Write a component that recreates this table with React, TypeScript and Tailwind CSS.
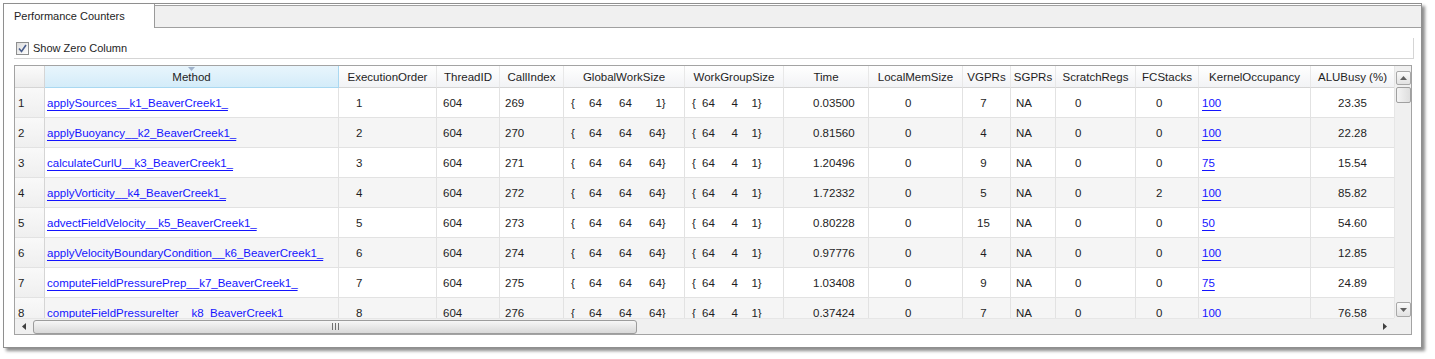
import React from 'react';

type Row = {
    method: string;
    order: string;
    thread: string;
    call: string;
    global: [string, string, string];
    group: [string, string, string];
    time: string;
    localMem: string;
    vgprs: string;
    sgprs: string;
    scratch: string;
    fcStacks: string;
    occupancy: string;
    aluBusy: string;
};

const rows: Row[] = [
    { method: 'applySources__k1_BeaverCreek1_', order: '1', thread: '604', call: '269', global: ['64', '64', '1'], group: ['64', '4', '1'], time: '0.03500', localMem: '0', vgprs: '7', sgprs: 'NA', scratch: '0', fcStacks: '0', occupancy: '100', aluBusy: '23.35' },
    { method: 'applyBuoyancy__k2_BeaverCreek1_', order: '2', thread: '604', call: '270', global: ['64', '64', '64'], group: ['64', '4', '1'], time: '0.81560', localMem: '0', vgprs: '4', sgprs: 'NA', scratch: '0', fcStacks: '0', occupancy: '100', aluBusy: '22.28' },
    { method: 'calculateCurlU__k3_BeaverCreek1_', order: '3', thread: '604', call: '271', global: ['64', '64', '64'], group: ['64', '4', '1'], time: '1.20496', localMem: '0', vgprs: '9', sgprs: 'NA', scratch: '0', fcStacks: '0', occupancy: '75', aluBusy: '15.54' },
    { method: 'applyVorticity__k4_BeaverCreek1_', order: '4', thread: '604', call: '272', global: ['64', '64', '64'], group: ['64', '4', '1'], time: '1.72332', localMem: '0', vgprs: '5', sgprs: 'NA', scratch: '0', fcStacks: '2', occupancy: '100', aluBusy: '85.82' },
    { method: 'advectFieldVelocity__k5_BeaverCreek1_', order: '5', thread: '604', call: '273', global: ['64', '64', '64'], group: ['64', '4', '1'], time: '0.80228', localMem: '0', vgprs: '15', sgprs: 'NA', scratch: '0', fcStacks: '0', occupancy: '50', aluBusy: '54.60' },
    { method: 'applyVelocityBoundaryCondition__k6_BeaverCreek1_', order: '6', thread: '604', call: '274', global: ['64', '64', '64'], group: ['64', '4', '1'], time: '0.97776', localMem: '0', vgprs: '4', sgprs: 'NA', scratch: '0', fcStacks: '0', occupancy: '100', aluBusy: '12.85' },
    { method: 'computeFieldPressurePrep__k7_BeaverCreek1_', order: '7', thread: '604', call: '275', global: ['64', '64', '64'], group: ['64', '4', '1'], time: '1.03408', localMem: '0', vgprs: '9', sgprs: 'NA', scratch: '0', fcStacks: '0', occupancy: '75', aluBusy: '24.89' },
    { method: 'computeFieldPressureIter__k8_BeaverCreek1', order: '8', thread: '604', call: '276', global: ['64', '64', '64'], group: ['64', '4', '1'], time: '0.37424', localMem: '0', vgprs: '7', sgprs: 'NA', scratch: '0', fcStacks: '0', occupancy: '100', aluBusy: '76.58' },
];

const headers = ['ExecutionOrder', 'ThreadID', 'CallIndex', 'GlobalWorkSize', 'WorkGroupSize', 'Time', 'LocalMemSize', 'VGPRs', 'SGPRs', 'ScratchRegs', 'FCStacks', 'KernelOccupancy', 'ALUBusy (%)'];

const gridCols = 'grid grid-cols-[30px_294px_98px_63px_64px_121px_99px_85px_94px_48px_45px_80px_63px_112px_84px]';

const cellBase = 'flex items-center h-[30px] pt-[2px] border-r border-b border-[#e2e2e2] whitespace-nowrap overflow-hidden';

function Link({ children }: { children: React.ReactNode }) {
    return <span className="text-[#1414ff] underline underline-offset-[3px] decoration-skip-ink-none">{children}</span>;
}

function Triple({ values, widths }: { values: [string, string, string]; widths: [string, string, string] }) {
    return (
        <span className="flex">
            <span>{'{'}</span>
            <span className={`${widths[0]} text-right`}>{values[0]}</span>
            <span className={`${widths[1]} text-right`}>{values[1]}</span>
            <span className={`${widths[2]} text-right`}>{values[2]}</span>
            <span>{'}'}</span>
        </span>
    );
}

function Checkbox() {
    return (
        <span className="w-[13px] h-[13px] border border-[#8e8f8f] bg-gradient-to-br from-[#dcdcdc] to-white flex items-center justify-center">
            <svg width="11" height="11" viewBox="0 0 11 11">
                <path d="M2 5.5 L4.5 8.5 L9 2" fill="none" stroke="#4a5e8c" strokeWidth="1.6" />
            </svg>
        </span>
    );
}

function VScrollbar() {
    return (
        <div className="w-[17px] h-[252px] bg-[#f0f0f0] border-l border-[#e6e6e6] flex flex-col items-center pt-[5px]">
            <div className="w-[15px] h-[14px] border border-[#a8a8a8] rounded-[2px] bg-gradient-to-b from-[#fafafa] to-[#e2e2e2] flex items-center justify-center">
                <svg width="7" height="4" viewBox="0 0 7 4"><path d="M0 4 L3.5 0 L7 4 Z" fill="#606060" /></svg>
            </div>
            <div className="mt-[2px] w-[15px] h-[16px] border border-[#a0a0a0] rounded-[2px] bg-gradient-to-r from-[#f4f4f4] to-[#dedede]" />
            <div className="flex-1" />
            <div className="mb-[1px] w-[15px] h-[15px] border border-[#a8a8a8] rounded-[2px] bg-gradient-to-b from-[#fafafa] to-[#e2e2e2] flex items-center justify-center">
                <svg width="7" height="4" viewBox="0 0 7 4"><path d="M0 0 L3.5 4 L7 0 Z" fill="#606060" /></svg>
            </div>
        </div>
    );
}

function HScrollbar() {
    return (
        <div className="w-[1380px] h-[16px] bg-[#f0f0f0] border-t border-[#e6e6e6] flex items-center">
            <div className="w-[18px] flex justify-center">
                <svg width="4" height="7" viewBox="0 0 4 7"><path d="M4 0 L0 3.5 L4 7 Z" fill="#404040" /></svg>
            </div>
            <div className="w-[604px] h-[14px] border border-[#9c9c9c] rounded-[3px] bg-gradient-to-b from-[#f6f6f6] to-[#d9d9d9] flex items-center justify-center">
                <span className="flex gap-[2px]">
                    <span className="w-[1px] h-[7px] bg-[#707070]" />
                    <span className="w-[1px] h-[7px] bg-[#707070]" />
                    <span className="w-[1px] h-[7px] bg-[#707070]" />
                </span>
            </div>
            <div className="flex-1" />
            <div className="w-[18px] flex justify-center">
                <svg width="4" height="7" viewBox="0 0 4 7"><path d="M0 0 L4 3.5 L0 7 Z" fill="#404040" /></svg>
            </div>
        </div>
    );
}

export default function App() {
    return (
        <div className="w-[1435px] h-[359px] bg-white pt-[3px] pl-[3px] font-['Liberation_Sans',Arial,sans-serif] text-[#1e1e1e]">
            <div className="w-[1419px] h-[345px] border border-[#8f8f8f] shadow-[3px_3px_3px_rgba(0,0,0,0.45)] bg-white flex flex-col">
                {/* tab strip */}
                <div className="flex h-[24px]">
                    <div className="w-[151px] h-[24px] bg-white border-r border-[#9a9a9a] flex items-center pl-[10px] text-[11px]">
                        Performance Counters
                    </div>
                    <div className="flex-1 mt-[1px] bg-[#f0f0f0] border-t border-b border-[#a0a0a0]" />
                </div>

                {/* options bar */}
                <div className="ml-[10px] mt-[10px] w-[1400px] h-[21px] border-r border-b border-[#d5d5d5] flex items-center pl-[2px] gap-[4px] text-[11px]">
                    <Checkbox />
                    <span>Show Zero Column</span>
                </div>

                {/* grid */}
                <div className="ml-[10px] mt-[6px] w-[1398px] h-[270px] border border-[#a3a3a3] flex flex-col text-[11.5px]">
                    <div className="flex h-[252px]">
                        <div className="w-[1380px] h-[252px] overflow-hidden">
                            <div className={`${gridCols} h-[22px]`}>
                                <div className="h-[22px] border-r border-b border-[#d5d5d5] bg-gradient-to-b from-[#fbfbfb] to-[#ececec]" />
                                <div className="relative h-[22px] pt-[2px] flex items-center justify-center border-r border-b border-[#a9d8f1] bg-gradient-to-b from-[#e8f5fc] to-[#d4ecf9]">
                                    <svg className="absolute top-[1px] left-[143px]" width="7" height="4" viewBox="0 0 7 4">
                                        <path d="M0 0 L7 0 L3.5 4 Z" fill="#a0b2ca" />
                                    </svg>
                                    Method
                                </div>
                                {headers.map(h => (
                                    <div key={h} className="h-[22px] pt-[2px] flex items-center justify-center border-r border-b border-r-[#e8e8e8] border-b-[#d5d5d5] bg-gradient-to-b from-white to-[#f2f3f5] whitespace-nowrap">
                                        {h}
                                    </div>
                                ))}
                            </div>
                            {rows.map((r, i) => {
                                const bg = i % 2 === 1 ? 'bg-[#f5f5f5]' : 'bg-white';
                                return (
                                    <div key={r.order} className={`${gridCols} h-[30px]`}>
                                        <div className={`${cellBase} pl-[3px] border-r-[#d5d5d5] bg-gradient-to-b from-[#f9f9f9] to-[#efefef]`}>{r.order}</div>
                                        <div className={`${cellBase} ${bg} pl-[2px]`}><Link>{r.method}</Link></div>
                                        <div className={`${cellBase} ${bg} pl-[17px]`}>{r.order}</div>
                                        <div className={`${cellBase} ${bg} pl-[6px]`}>{r.thread}</div>
                                        <div className={`${cellBase} ${bg} pl-[5px]`}>{r.call}</div>
                                        <div className={`${cellBase} ${bg} pl-[7px]`}><Triple values={r.global} widths={['w-[27px]', 'w-[30px]', 'w-[30px]']} /></div>
                                        <div className={`${cellBase} ${bg} pl-[7px]`}><Triple values={r.group} widths={['w-[19px]', 'w-[23px]', 'w-[20px]']} /></div>
                                        <div className={`${cellBase} ${bg} pl-[29px]`}>{r.time}</div>
                                        <div className={`${cellBase} ${bg} pl-[36px]`}>{r.localMem}</div>
                                        <div className={`${cellBase} ${bg} justify-center pr-[6px]`}>{r.vgprs}</div>
                                        <div className={`${cellBase} ${bg} pl-[5px]`}>{r.sgprs}</div>
                                        <div className={`${cellBase} ${bg} pl-[19px]`}>{r.scratch}</div>
                                        <div className={`${cellBase} ${bg} pl-[20px]`}>{r.fcStacks}</div>
                                        <div className={`${cellBase} ${bg} pl-[3px]`}><Link>{r.occupancy}</Link></div>
                                        <div className={`${cellBase} ${bg} justify-center`}>{r.aluBusy}</div>
                                    </div>
                                );
                            })}
                        </div>
                        <VScrollbar />
                    </div>
                    <div className="flex h-[16px]">
                        <HScrollbar />
                        <div className="w-[17px] h-[16px] bg-[#f0f0f0]" />
                    </div>
                </div>
            </div>
        </div>
    );
}
